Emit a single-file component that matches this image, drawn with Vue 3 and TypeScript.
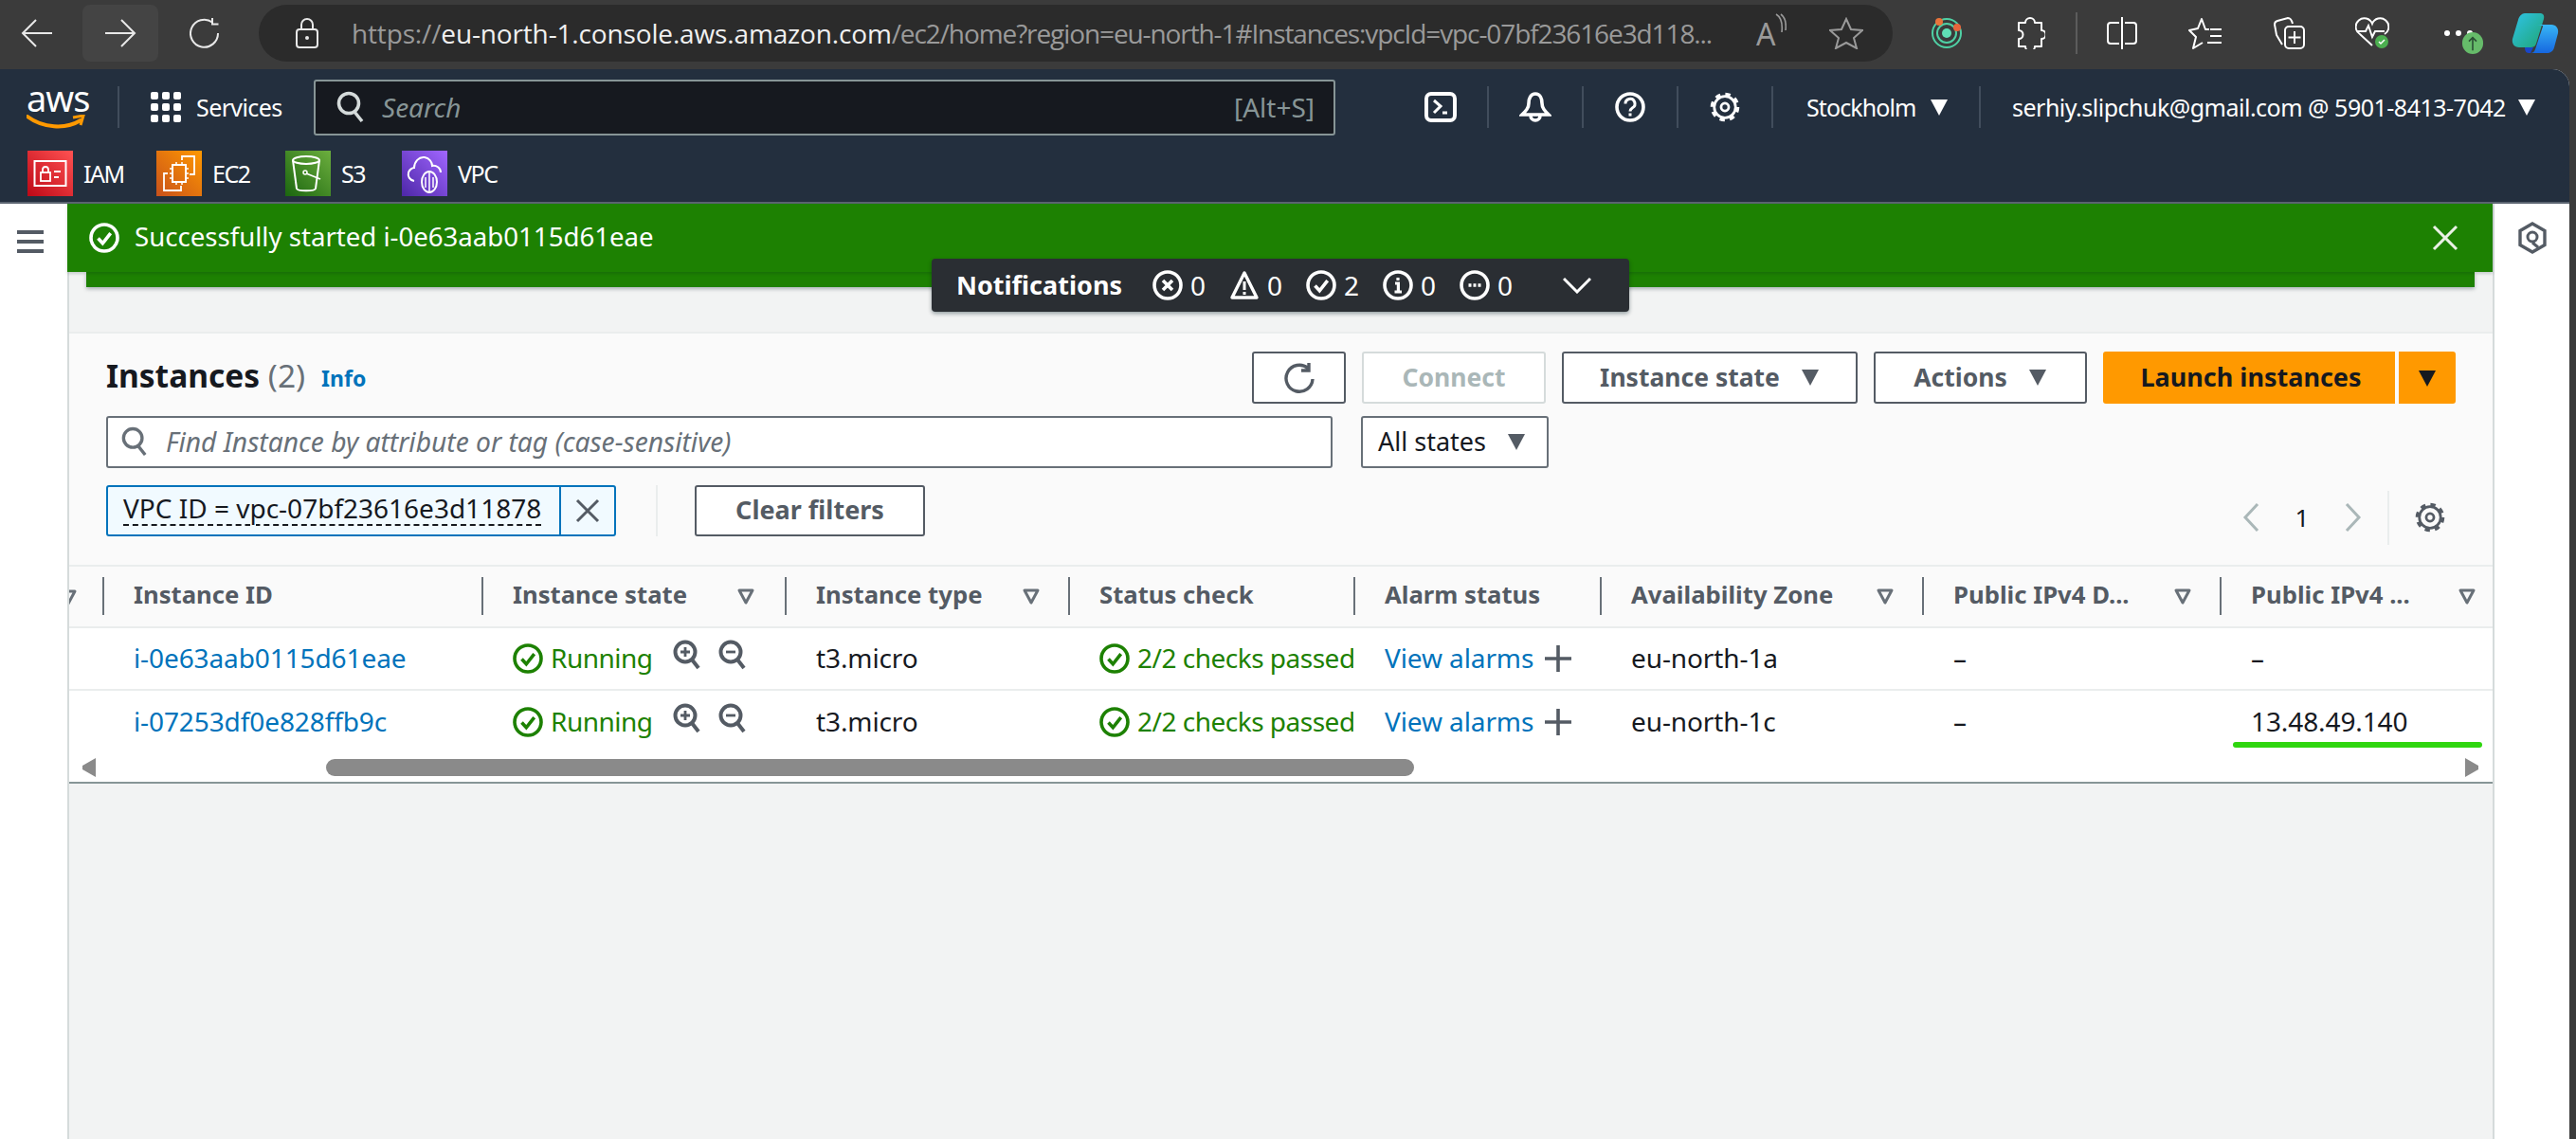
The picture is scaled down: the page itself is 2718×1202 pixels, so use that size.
<script setup lang="ts">
interface Col { label: string; sort: boolean; sortOnly?: boolean }
const cols: Col[] = [
  { label: '', sort: true, sortOnly: true },
  { label: 'Instance ID', sort: false },
  { label: 'Instance state', sort: true },
  { label: 'Instance type', sort: true },
  { label: 'Status check', sort: false },
  { label: 'Alarm status', sort: false },
  { label: 'Availability Zone', sort: true },
  { label: 'Public IPv4 D...', sort: true },
  { label: 'Public IPv4 ...', sort: true }
]
const rows = [
  { id: 'i-0e63aab0115d61eae', zone: 'eu-north-1a', dns: '–', ip: '–', mark: false },
  { id: 'i-07253df0e828ffb9c', zone: 'eu-north-1c', dns: '–', ip: '13.48.49.140', mark: true }
]
const counts = [
  { icon: 'n-err', n: 0 },
  { icon: 'n-warn', n: 0 },
  { icon: 'check', n: 2 },
  { icon: 'n-info', n: 0 },
  { icon: 'n-more', n: 0 }
]
</script>

<template>
  <div class="root">
    <svg class="defs" width="0" height="0" aria-hidden="true">
      <symbol id="check" viewBox="0 0 32 32"><circle cx="16" cy="16" r="14" fill="none" stroke="currentColor" stroke-width="3.6"/><path d="M9.5 16.5l4.8 5.3 8.4-10.6" fill="none" stroke="currentColor" stroke-width="3.6"/></symbol>
      <symbol id="gear" viewBox="0 0 32 32"><circle cx="16" cy="16" r="12.6" fill="none" stroke="currentColor" stroke-width="3.6" stroke-dasharray="5 4.9"/><circle cx="16" cy="16" r="10.6" fill="none" stroke="currentColor" stroke-width="2.6"/><circle cx="16" cy="16" r="3.8" fill="none" stroke="currentColor" stroke-width="2.6"/></symbol>
      <symbol id="caret" viewBox="0 0 20 20"><path d="M1 2h18L10 19z" fill="currentColor"/></symbol>
      <symbol id="sort" viewBox="0 0 20 20"><path d="M3 4h14l-7 13z" fill="none" stroke="currentColor" stroke-width="3" stroke-linejoin="round"/></symbol>
      <symbol id="zoomin" viewBox="0 0 30 32"><circle cx="13" cy="13" r="10.5" fill="none" stroke="currentColor" stroke-width="4"/><path d="M20 21l7 9" stroke="currentColor" stroke-width="4"/><path d="M13 8v10M8 13h10" stroke="currentColor" stroke-width="2.8"/></symbol>
      <symbol id="zoomout" viewBox="0 0 30 32"><circle cx="13" cy="13" r="10.5" fill="none" stroke="currentColor" stroke-width="4"/><path d="M20 21l7 9" stroke="currentColor" stroke-width="4"/><path d="M8 13h10" stroke="currentColor" stroke-width="2.8"/></symbol>
      <symbol id="n-err" viewBox="0 0 32 32"><circle cx="16" cy="16" r="14" fill="none" stroke="currentColor" stroke-width="3.6"/><path d="M11 11l10 10M21 11L11 21" stroke="currentColor" stroke-width="3.6"/></symbol>
      <symbol id="n-warn" viewBox="0 0 32 32"><path d="M16 3l13 26H3z" fill="none" stroke="currentColor" stroke-width="3.4" stroke-linejoin="round"/><path d="M16 12v9M16 23v3" stroke="currentColor" stroke-width="3"/></symbol>
      <symbol id="n-info" viewBox="0 0 32 32"><circle cx="16" cy="16" r="14" fill="none" stroke="currentColor" stroke-width="3.6"/><path d="M16 8v3M13 14h3.4v9M12.5 23h7.5" fill="none" stroke="currentColor" stroke-width="3.2"/></symbol>
      <symbol id="n-more" viewBox="0 0 32 32"><circle cx="16" cy="16" r="14" fill="none" stroke="currentColor" stroke-width="3.6"/><path d="M9.5 16h13" stroke="currentColor" stroke-width="3.4" stroke-dasharray="3 2"/></symbol>
    </svg>

    <div class="toolbar">
      <div class="tb-slot first"><svg width="34" height="30" viewBox="0 0 34 30"><path d="M33 15H2M16 1L2 15l14 14" fill="none" stroke="#e8e8e8" stroke-width="2"/></svg></div>
      <div class="tb-slot hover"><svg width="34" height="30" viewBox="0 0 34 30"><path d="M1 15h31M18 1l14 14-14 14" fill="none" stroke="#e8e8e8" stroke-width="2"/></svg></div>
      <div class="tb-slot"><svg width="32" height="34" viewBox="0 0 32 34"><path d="M24 5.500A14.500 14.500 0 1 0 30 17M24 1v6.500h6.500" fill="none" stroke="#e8e8e8" stroke-width="2"/></svg></div>
      <div class="pill">
        <svg class="lock" width="26" height="32" viewBox="0 0 26 32"><rect x="2" y="12" width="22" height="19" rx="3" fill="none" stroke="#e8e8e8" stroke-width="2"/><path d="M7 12V7a6 6 0 0 1 12 0v5" fill="none" stroke="#e8e8e8" stroke-width="2"/><circle cx="13" cy="21" r="2" fill="#e8e8e8"/></svg>
        <div class="url"><span class="dim">https://</span><span class="host">eu-north-1.console.aws.amazon.com</span><span class="dim rest">/ec2/home?region=eu-north-1#Instances:vpcId=vpc-07bf23616e3d118...</span></div>
        <span class="read">A<svg width="12" height="22" viewBox="0 0 12 22"><path d="M1 1c5 3 7 10 6 19M6 1c4 3 6 9 5 17" fill="none" stroke="#9a9a9a" stroke-width="1.600"/></svg></span>
        <svg class="star" width="36" height="34" viewBox="0 0 36 34"><path d="M18 2l5 11 12 1-9 8 3 11-11-6-11 6 3-11-9-8 12-1z" fill="none" stroke="#9a9a9a" stroke-width="2"/></svg>
      </div>
      <div class="tb-actions">
        <div class="act"><svg width="34" height="34" viewBox="0 0 34 34"><circle cx="17" cy="17" r="15" fill="none" stroke="#4fd1a5" stroke-width="2"/><circle cx="17" cy="17" r="10" fill="none" stroke="#4fd1a5" stroke-width="2"/><circle cx="17" cy="17" r="5" fill="#5fe0b5"/><circle cx="9" cy="5" r="4" fill="#e8743b"/><circle cx="28" cy="11" r="4" fill="#e8643b"/></svg></div>
        <div class="act"><svg width="32" height="34" viewBox="0 0 32 34"><path d="M11 6a5 5 0 0 1 10 0h7v8a4 4 0 0 1 0 9v8h-7a5 5 0 0 1-10 0H4v-8a4 4 0 0 0 0-9V6z" fill="none" stroke="#fff" stroke-width="2" stroke-linejoin="round"/></svg></div>
        <div class="tb-sep"></div>
        <div class="act"><svg width="32" height="34" viewBox="0 0 32 34"><path d="M13 6H4a3 3 0 0 0-3 3v16a3 3 0 0 0 3 3h9M19 6h9a3 3 0 0 1 3 3v16a3 3 0 0 1-3 3h-9M16 0v34" fill="none" stroke="#fff" stroke-width="2"/></svg></div>
        <div class="act"><svg width="36" height="34" viewBox="0 0 36 34"><path d="M22 13h-4L14 2l-4 10-9 2 7 7-3 12 10-6" fill="none" stroke="#fff" stroke-width="2" stroke-linejoin="round"/><path d="M23 13h12M23 20h12M20 27h15" stroke="#fff" stroke-width="2"/></svg></div>
        <div class="act"><svg width="34" height="36" viewBox="0 0 34 36"><path d="M10 30L4 20 2 9a4 4 0 0 1 3-4l11-3c3 0 4 2 5 6" fill="none" stroke="#fff" stroke-width="2"/><rect x="13" y="11" width="20" height="23" rx="4" fill="#3b3b3b" stroke="#fff" stroke-width="2"/><path d="M23 16v13M16.500 22.500h13" stroke="#fff" stroke-width="2"/></svg></div>
        <div class="act"><svg width="36" height="34" viewBox="0 0 36 34"><path d="M18 30L5 18A9 9 0 1 1 18 7 9 9 0 1 1 31 18" fill="none" stroke="#fff" stroke-width="2"/><path d="M2 15h9l3-6 4 12 3-6h10" fill="none" stroke="#fff" stroke-width="2"/><circle cx="28" cy="26" r="7" fill="#4caf50"/><path d="M25 26l2 2 4-4" fill="none" stroke="#fff" stroke-width="1.500"/></svg></div>
        <div class="act more"><i></i><i></i><i></i><span class="badge"><svg width="12" height="16" viewBox="0 0 12 20"><path d="M6 19V2M1 7l5-5 5 5" fill="none" stroke="#2b4f35" stroke-width="2"/></svg></span></div>
        <div class="act copilot"><svg width="50" height="44" viewBox="0 0 50 44"><defs><linearGradient id="cpA" x1="0" y1="0" x2="1" y2="1"><stop offset="0" stop-color="#2fc3e8"/><stop offset="1" stop-color="#1fa574"/></linearGradient><linearGradient id="cpB" x1="0" y1="0" x2="0" y2="1"><stop offset="0" stop-color="#38b6f5"/><stop offset="1" stop-color="#1667e0"/></linearGradient></defs><path d="M14 1h16c3 0 5 2 4 6l-8 26c-1 3-3 4-6 4H8C3 37 0 33 1 28L7 8c1-4 4-7 7-7z" fill="url(#cpA)"/><path d="M22 13h20c5 0 8 4 7 9l-4 15c-1 4-4 6-8 6H20c2 0 4-1 5-4l8-24c1-1-2-2-11-2z" fill="url(#cpB)"/><path d="M14 37h9l-3 6h-2c-3 0-4-3-4-6z" fill="#1a46c8"/></svg></div>
      </div>
    </div>

    <div class="page">
      <header class="nav">
        <div class="nav-top">
          <div class="logo"><span class="aws">aws</span><svg width="62" height="16" viewBox="0 0 62 16"><path d="M1 2c16 12 40 14 56 4" fill="none" stroke="#f90" stroke-width="4" stroke-linecap="round"/><path d="M49 3l11-2-3 10" fill="none" stroke="#f90" stroke-width="3"/></svg></div>
          <div class="nav-div first"></div>
          <div class="grid-ico"><i v-for="n in 9" :key="n"></i></div>
          <span class="services">Services</span>
          <div class="nav-search">
            <svg width="30" height="34" viewBox="0 0 30 34"><circle cx="13" cy="13" r="10.500" fill="none" stroke="#d5dbdb" stroke-width="3.600"/><path d="M19 22l8 10" stroke="#d5dbdb" stroke-width="3.600"/></svg>
            <span class="s-ph">Search</span>
            <span class="s-key">[Alt+S]</span>
          </div>
          <div class="nav-ic">
            <svg width="34" height="32" viewBox="0 0 34 32"><rect x="2" y="2" width="30" height="28" rx="5" fill="none" stroke="#fff" stroke-width="4"/><path d="M10 9l7 6-7 7M19 22h5" fill="none" stroke="#fff" stroke-width="3"/></svg>
          </div>
          <div class="nav-div"></div>
          <div class="nav-ic">
            <svg width="34" height="32" viewBox="0 0 34 32"><path d="M17 2c-5 0-7 5-7 10 0 5-3 8-7 12h28c-4-4-7-7-7-12 0-5-2-10-7-10zM12 25a5 5 0 0 0 10 0" fill="none" stroke="#fff" stroke-width="3.600"/></svg>
          </div>
          <div class="nav-div"></div>
          <div class="nav-ic">
            <svg width="34" height="32" viewBox="0 0 34 32"><circle cx="17" cy="16" r="14" fill="none" stroke="#fff" stroke-width="3.600"/><path d="M12 12.500a5 5 0 1 1 7.500 4.200c-1.500 1-2.500 1.800-2.500 3.800M17 22.500v3" fill="none" stroke="#fff" stroke-width="3"/></svg>
          </div>
          <div class="nav-div"></div>
          <div class="nav-ic"><svg class="white" width="34" height="34"><use href="#gear"/></svg></div>
          <div class="nav-div"></div>
          <div class="acct first-acct"><span>Stockholm</span><svg class="white" width="20" height="20"><use href="#caret"/></svg></div>
          <div class="nav-div"></div>
          <div class="acct email"><span>serhiy.slipchuk@gmail.com @ 5901-8413-7042</span><svg class="white" width="20" height="20"><use href="#caret"/></svg></div>
        </div>
        <div class="nav-bottom">
          <div class="svc">
            <div class="tile iam"><svg width="36" height="36" viewBox="0 0 36 36"><rect x="1.500" y="5" width="33" height="26" fill="none" stroke="#fff" stroke-width="2"/><rect x="8" y="17" width="10" height="9" fill="none" stroke="#fff" stroke-width="1.800"/><path d="M10 17v-3a3 3 0 0 1 6 0v3M22 16h7M22 22h5" fill="none" stroke="#fff" stroke-width="1.800"/></svg></div><span class="w40">IAM</span>
          </div>
          <div class="svc">
            <div class="tile ec2"><svg width="36" height="40" viewBox="0 0 36 40"><path d="M21 6V2h13v19h-5M6 20H2v18h18v-5" fill="none" stroke="#fff" stroke-width="1.800"/><rect x="11" y="11" width="14" height="18" fill="none" stroke="#fff" stroke-width="2"/><path d="M8 15h3M8 20h3M8 25h3M25 15h3M25 20h3M25 25h3M15 8v3M21 8v3M15 29v3M21 29v3" stroke="#fff" stroke-width="1.500"/></svg></div><span class="w40">EC2</span>
          </div>
          <div class="svc">
            <div class="tile s3"><svg width="36" height="42" viewBox="0 0 36 42"><ellipse cx="16" cy="7" rx="14" ry="4" fill="none" stroke="#fff" stroke-width="2"/><path d="M2 7l4 30c1 3 19 3 20 0l4-30" fill="none" stroke="#fff" stroke-width="2"/><circle cx="15" cy="20" r="2" fill="none" stroke="#fff" stroke-width="1.500"/><path d="M16 21l15 6" stroke="#fff" stroke-width="1.800"/></svg></div><span class="w27">S3</span>
          </div>
          <div class="svc">
            <div class="tile vpc"><svg width="38" height="44" viewBox="0 0 38 44"><path d="M8 30C3 29 1 25 2 21c1-3 4-5 6-5 0-6 5-12 11-11 5 1 8 5 8 9 4-1 9 2 9 7" fill="none" stroke="#fff" stroke-width="2"/><ellipse cx="24" cy="31" rx="8" ry="11" fill="none" stroke="#fff" stroke-width="2"/><path d="M24 20v22M20 26v11M28 26v11" stroke="#fff" stroke-width="1.500"/></svg></div><span>VPC</span>
          </div>
        </div>
      </header>

      <div class="body">
        <aside class="side-l">
          <div class="burger"><i></i><i></i><i></i></div>
        </aside>
        <main class="main">
          <div class="flash">
            <svg class="white" width="32" height="32"><use href="#check"/></svg>
            <span class="flash-txt">Successfully started i-0e63aab0115d61eae</span>
            <svg class="flash-x" width="28" height="28" viewBox="0 0 28 28"><path d="M2 2l24 24M26 2L2 26" stroke="#eaf1e5" stroke-width="3"/></svg>
          </div>
          <div class="flash-under"></div>
          <div class="notif">
            <span class="notif-title">Notifications</span>
            <span v-for="c in counts" :key="c.icon" class="notif-c">
              <svg width="32" height="32"><use :href="'#' + c.icon"/></svg>{{ c.n }}
            </span>
            <svg class="notif-chev" width="30" height="18" viewBox="0 0 30 18"><path d="M1 2l14 14L29 2" fill="none" stroke="#fff" stroke-width="3"/></svg>
          </div>

          <section class="panel">
            <div class="p-row one">
              <h1 class="title">Instances <span class="count">(2)</span></h1>
              <a class="info">Info</a>
              <div class="btns">
                <button class="btn refresh"><svg width="36" height="34" viewBox="0 0 36 34"><path d="M27 6.500A14 14 0 1 0 32 18M28 1v8h-8" fill="none" stroke="#545b64" stroke-width="3.400"/></svg></button>
                <button class="btn connect">Connect</button>
                <button class="btn istate">Instance state<svg width="20" height="20"><use href="#caret"/></svg></button>
                <button class="btn actions">Actions<svg width="20" height="20"><use href="#caret"/></svg></button>
                <div class="launch-group">
                  <button class="launch">Launch instances</button>
                  <button class="launch-caret"><svg width="20" height="20"><use href="#caret"/></svg></button>
                </div>
              </div>
            </div>
            <div class="p-row two">
              <div class="find">
                <svg width="28" height="32" viewBox="0 0 30 34"><circle cx="13" cy="13" r="10.500" fill="none" stroke="#687078" stroke-width="3.600"/><path d="M19 22l8 10" stroke="#687078" stroke-width="3.600"/></svg>
                <span>Find Instance by attribute or tag (case-sensitive)</span>
              </div>
              <div class="states"><span>All states</span><svg width="20" height="20"><use href="#caret"/></svg></div>
            </div>
            <div class="p-row three">
              <div class="chip">
                <span class="chip-txt">VPC ID = vpc-07bf23616e3d11878</span>
                <span class="chip-x"><svg width="26" height="26" viewBox="0 0 26 26"><path d="M2 2l22 22M24 2L2 24" stroke="#545b64" stroke-width="3"/></svg></span>
              </div>
              <div class="v-div"></div>
              <button class="btn clear">Clear filters</button>
              <div class="pager">
                <svg width="18" height="32" viewBox="0 0 18 32"><path d="M16 2L3 16l13 14" fill="none" stroke="#aab7b8" stroke-width="3"/></svg>
                <span class="page-n">1</span>
                <svg width="18" height="32" viewBox="0 0 18 32"><path d="M2 2l13 14L2 30" fill="none" stroke="#aab7b8" stroke-width="3"/></svg>
                <div class="pager-div"></div>
                <svg class="gear-g" width="34" height="34"><use href="#gear"/></svg>
              </div>
            </div>
          </section>

          <section class="table">
            <div class="t-head t-grid">
              <div v-for="(c, i) in cols" :key="i" class="th" :class="{ stub: c.sortOnly }">
                <span class="th-l">{{ c.label }}</span>
                <svg v-if="c.sort" class="th-s" width="20" height="20"><use href="#sort"/></svg>
              </div>
            </div>
            <div v-for="r in rows" :key="r.id" class="t-row t-grid">
              <div class="td"></div>
              <div class="td"><a class="link">{{ r.id }}</a></div>
              <div class="td green">
                <svg width="32" height="32"><use href="#check"/></svg><span>Running</span>
                <svg class="zi" width="30" height="32"><use href="#zoomin"/></svg>
                <svg class="zo" width="30" height="32"><use href="#zoomout"/></svg>
              </div>
              <div class="td">t3.micro</div>
              <div class="td green clip">
                <svg width="32" height="32"><use href="#check"/></svg><span>2/2 checks passed</span>
              </div>
              <div class="td"><a class="link">View alarms</a><svg class="plus" width="28" height="28" viewBox="0 0 28 28"><path d="M14 0v28M0 14h28" stroke="#545b64" stroke-width="3.600"/></svg></div>
              <div class="td">{{ r.zone }}</div>
              <div class="td">{{ r.dns }}</div>
              <div class="td ip">{{ r.ip }}<span v-if="r.mark" class="mark"></span></div>
            </div>
            <div class="scroller">
              <svg width="16" height="20" viewBox="0 0 16 20"><path d="M15 0v20L1 12V8z" fill="#8a8a8a"/></svg>
              <div class="track"><div class="thumb"></div></div>
              <svg width="16" height="20" viewBox="0 0 16 20"><path d="M1 0v20l14-8V8z" fill="#8a8a8a"/></svg>
            </div>
          </section>
        </main>
        <aside class="side-r">
          <svg width="32" height="34" viewBox="0 0 32 34"><path d="M16 2l13 7.500v15L16 32 3 24.500v-15z" fill="none" stroke="#545b64" stroke-width="3.400"/><circle cx="16" cy="16" r="5" fill="none" stroke="#545b64" stroke-width="3"/><path d="M16 22l6 5" stroke="#545b64" stroke-width="3"/></svg>
        </aside>
      </div>
    </div>
  </div>
</template>

<style>
html, body { margin: 0; background: #3b3b3b; }
</style>

<style scoped>
* { box-sizing: border-box; }
.root {
  width: 2718px; height: 1202px; overflow: hidden; position: relative;
  display: flex; flex-direction: column; background: #3b3b3b;
  font-family: "Noto Sans", "Open Sans", sans-serif; font-size: 28px; color: #16191f;
}
.defs { position: absolute; }
.white { color: #fff; }
svg { flex: none; }

.toolbar { height: 73px; flex: none; display: flex; align-items: flex-start; padding-top: 5px; gap: 9px; }
.tb-slot { width: 80px; height: 60px; flex: none; display: flex; align-items: center; justify-content: center; border-radius: 8px; }
.tb-slot.first { width: 78px; }
.tb-slot.hover { background: #444; }
.pill { margin-left: 8px; width: 1724px; flex: none; height: 60px; border-radius: 30px; background: #2b2b2b; display: flex; align-items: center; padding-left: 38px; }
.url { margin-left: 34px; width: 1445px; flex: none; white-space: nowrap; overflow: hidden; font-family: "Open Sans", sans-serif; font-size: 28px; letter-spacing: -.15px; color: #d8d8d8; }
.url .dim { color: #9a9a9a; }
.url .rest { letter-spacing: -1.1px; }
.url .host { color: #f0f0f0; }
.read { margin-left: 37px; color: #9a9a9a; font-size: 32px; display: flex; align-items: flex-start; width: 38px; flex: none; }
.star { margin-left: 39px; }
.tb-actions { display: flex; align-items: center; margin-left: 4px; flex: none; height: 60px; }
.act { width: 88px; height: 60px; display: flex; align-items: center; justify-content: center; flex: none; position: relative; }
.tb-sep { width: 2px; height: 44px; background: #5c5c5c; margin: 0 3px 0 4px; flex: none; }
.more { gap: 6px; justify-content: flex-start; padding-left: 32px; }
.more i { width: 6px; height: 6px; border-radius: 3px; background: #fff; }
.copilot { margin-left: -4px; }
.badge { position: absolute; left: 51px; top: 29px; width: 22px; height: 23px; border-radius: 11px; background: #66bb6a; display: flex; align-items: center; justify-content: center; }

.page { flex: 1; margin-right: 7px; background: #fff; border-top-right-radius: 18px; overflow: hidden; display: flex; flex-direction: column; min-height: 0; }
.nav { flex: none; height: 142px; background: #232f3e; border-bottom: 2px solid #5a6470; color: #fff; font-family: "Noto Sans", sans-serif; }
.nav-top { height: 80px; display: flex; align-items: center; padding-left: 28px; }
.logo { width: 62px; flex: none; display: flex; flex-direction: column; height: 52px; position: relative; }
.logo .aws { font-size: 38px; line-height: 32px; letter-spacing: -1px; height: 34px; }
.nav-div { width: 2px; height: 44px; background: #414d5c; flex: none; }
.nav-div.first { margin-left: 34px; margin-right: 33px; }
.grid-ico { width: 32px; height: 32px; flex: none; display: grid; grid-template-columns: repeat(3, 8px); grid-template-rows: repeat(3, 8px); gap: 4px; }
.grid-ico i { background: #fff; border-radius: 2px; }
.services { margin-left: 16px; font-size: 25px; letter-spacing: -.6px; width: 100px; flex: none; white-space: nowrap; }
.nav-search { margin-left: 24px; width: 1078px; flex: none; height: 59px; background: #16191f; border: 2px solid #879596; border-radius: 3px; display: flex; align-items: center; padding: 0 20px 0 22px; margin-right: 62px; }
.s-ph { margin-left: 18px; font-style: italic; color: #879596; font-size: 28px; }
.s-key { margin-left: auto; color: #879596; font-size: 28px; }
.nav-ic { width: 98px; display: flex; justify-content: center; flex: none; }
.acct { display: flex; align-items: center; gap: 12px; font-size: 25px; white-space: nowrap; flex: none; }
.first-acct { padding: 0 0 0 35px; width: 217px; letter-spacing: -.9px; gap: 14px; }
.email { padding-left: 33px; letter-spacing: -.5px; }
.nav-bottom { height: 60px; display: flex; align-items: center; padding-left: 29px; gap: 37px; }
.svc { display: flex; align-items: center; gap: 11px; font-size: 25px; letter-spacing: -1.5px; }
.w40 { width: 40px; }
.w27 { width: 27px; }
.tile { width: 48px; height: 48px; flex: none; display: flex; align-items: center; justify-content: center; overflow: hidden; }
.iam { background: linear-gradient(45deg, #bd0816, #ff5252); }
.ec2 { background: linear-gradient(45deg, #c8511b, #f90); }
.s3 { background: linear-gradient(45deg, #1b660f, #6cae3e); }
.vpc { background: linear-gradient(45deg, #4d27a8, #a166ff); }

.body { flex: 1; display: flex; min-height: 0; }
.side-l { width: 71px; flex: none; background: #fff; padding-top: 28px; padding-left: 18px; }
.burger { width: 28px; display: flex; flex-direction: column; gap: 6px; }
.burger i { height: 4px; background: #545b64; }
.side-r { width: 81px; flex: none; background: #fff; display: flex; justify-content: center; padding-top: 19px; border-left: 2px solid #d5dbdb; }
.main { flex: 1; min-width: 0; background: #f2f3f3; border-left: 2px solid #d5dbdb; position: relative; display: flex; flex-direction: column; }
.flash { height: 72px; flex: none; margin-left: -2px; background: #1d8102; color: #fff; display: flex; align-items: center; padding: 0 36px 0 23px; gap: 16px; position: relative; z-index: 1; box-shadow: 0 2px 3px rgba(0,28,36,.18); }
.flash-txt { font-size: 27.6px; white-space: nowrap; padding-bottom: 4px; }
.flash-x { margin-left: auto; }
.flash-under { height: 16px; margin: 0 19px 0 18px; flex: none; background: #1d8102; box-shadow: 0 2px 4px rgba(0,28,36,.3); }
.notif { position: absolute; left: 910px; top: 58px; width: 736px; height: 56px; background: #2a2e33; border-radius: 4px; color: #fff; display: flex; align-items: center; padding-left: 26px; box-shadow: 0 2px 4px rgba(0,28,36,.4); z-index: 3; }
.notif-title { font-weight: 700; font-size: 27px; width: 207px; white-space: nowrap; padding-bottom: 2px; }
.notif-c { display: flex; align-items: center; gap: 8px; width: 81px; font-size: 28px; }
.notif-chev { margin-left: 28px; }

.panel { margin-top: 47px; flex: none; height: 246px; background: #fafafa; border-top: 2px solid #eaeded; padding: 19px 39px 0; }
.p-row { display: flex; align-items: center; }
.p-row.one { height: 55px; }
.title { margin: -6px 0 0; font-size: 33.5px; font-weight: 700; white-space: nowrap; }
.count { font-weight: 400; color: #687078; }
.info { margin-left: 17px; margin-top: 0; font-size: 23px; font-weight: 700; color: #0073bb; }
.btns { margin-left: auto; display: flex; gap: 17px; }
.btn { height: 55px; border: 2px solid #545b64; background: #fff; border-radius: 3px; color: #545b64; font: 700 26.5px "Noto Sans", sans-serif; display: flex; align-items: center; justify-content: center; gap: 22px; padding: 0 0 2px; flex: none; }
.refresh { width: 99px; padding: 0; }
.connect { width: 194px; color: #aab7b8; border-color: #d5dbdb; }
.istate { width: 312px; }
.actions { width: 225px; }
.launch-group { display: flex; gap: 4px; }
.launch, .launch-caret { height: 55px; border: 0; background: #f90; font: 700 27px "Noto Sans", sans-serif; color: #16191f; padding: 0; display: flex; align-items: center; justify-content: center; }
.launch { width: 308px; border-radius: 3px 0 0 3px; padding: 0 0 2px 4px; }
.launch-caret { width: 60px; border-radius: 0 3px 3px 0; }
.p-row.two { height: 55px; margin-top: 13px; }
.find { width: 1294px; height: 55px; background: #fff; border: 2px solid #687078; border-radius: 3px; display: flex; align-items: center; padding: 0 0 2px 14px; gap: 19px; font-style: italic; color: #687078; font-size: 28.2px; }
.states { margin-left: 30px; width: 198px; height: 55px; background: #fff; border: 2px solid #687078; border-radius: 3px; display: flex; align-items: center; justify-content: space-between; padding: 0 22px 2px 16px; font-size: 27px; color: #16191f; }
.states svg { color: #545b64; }
.p-row.three { height: 54px; margin-top: 18px; }
.chip { width: 538px; height: 54px; flex: none; border: 2px solid #0073bb; border-radius: 3px; background: #f1faff; display: flex; align-items: stretch; }
.chip-txt { flex: 1; padding: 0 0 0 16px; font-size: 28px; line-height: 44px; white-space: nowrap; overflow: hidden; text-decoration: underline dashed #16191f 2px; text-underline-offset: 6px; }
.chip-x { width: 58px; flex: none; border-left: 2px solid #0073bb; display: flex; align-items: center; justify-content: center; }
.v-div { margin-left: 42px; width: 2px; height: 54px; background: #eaeded; flex: none; }
.clear { margin-left: 39px; width: 243px; height: 54px; font-size: 27px; padding-bottom: 4px; }
.pager { margin-left: auto; display: flex; align-items: center; margin-top: 14px; margin-right: 0; }
.page-n { width: 94px; text-align: center; font-size: 26px; margin: 0 -2px; }
.pager-div { width: 2px; height: 57px; background: #eaeded; margin: 0 26px 0 27px; }
.gear-g { color: #545b64; margin-right: 10px; }

.table { flex: none; background: #fff; border-bottom: 2px solid #879596; }
.t-grid { display: grid; grid-template-columns: 35px 400px 320px 299px 301px 260px 340px 314px 288px; }
.t-head { height: 67px; background: #fafafa; border-top: 2px solid #eaeded; border-bottom: 2px solid #eaeded; }
.th { display: flex; align-items: center; justify-content: space-between; padding: 0 29px 5px 33px; position: relative; font-weight: 700; font-size: 25.7px; color: #545b64; white-space: nowrap; }
.th:nth-child(3) { padding-right: 31px; }
.th:last-child { padding-right: 17px; }
.th::before { content: ""; position: absolute; left: 0; top: 11px; height: 40px; width: 2px; background: #687078; }
.th.stub { padding: 0 0 3px; overflow: hidden; justify-content: flex-start; }
.th.stub::before { display: none; }
.th.stub .th-l { display: none; }
.th.stub .th-s { margin-left: -11px; }
.th-s { color: #687078; flex: none; margin-top: 3px; }
.t-row { height: 66px; border-bottom: 2px solid #eaeded; }
.td { display: flex; align-items: center; padding: 0 0 2px 33px; white-space: nowrap; overflow: hidden; font-size: 28px; letter-spacing: -.1px; }
.td:first-child { padding: 0; }
.link { color: #0073bb; }
.green { color: #1d8102; letter-spacing: -.5px; }
.green > svg:first-child { margin-right: 8px; flex: none; margin-top: 2px; }
.zi { color: #545b64; margin-left: 21px; flex: none; margin-top: -6px; }
.zo { color: #545b64; margin-left: 18px; flex: none; margin-top: -6px; }
.plus { margin-left: 12px; flex: none; margin-top: 2px; }
.ip { position: relative; overflow: visible; }
.mark { position: absolute; left: 14px; top: 54px; width: 263px; height: 6px; border-radius: 3px; background: #2fd60f; z-index: 2; }
.t-row:nth-of-type(3) { border-bottom: 0; }
.scroller { height: 30px; display: flex; align-items: center; padding: 0 14px 0 13px; }
.track { flex: 1; height: 18px; position: relative; }
.thumb { position: absolute; left: 242px; width: 1148px; height: 18px; border-radius: 9px; background: #8a8a8a; }
</style>
